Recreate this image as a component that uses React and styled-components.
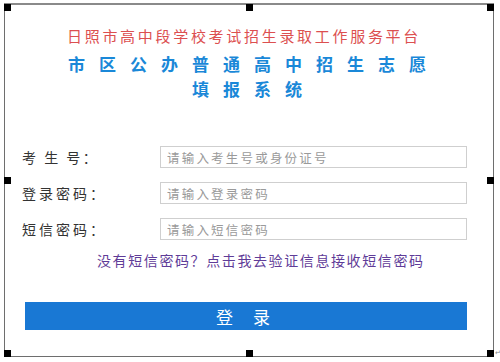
import React from 'react';
import styled, { createGlobalStyle } from 'styled-components';

const GlobalStyle = createGlobalStyle`
  body {
    margin: 0;
    background: #ffffff;
    font-family: "Noto Sans CJK SC", "Liberation Sans", sans-serif;
  }
`;

const Page = styled.div`
  width: 500px;
  height: 362px;
  padding: 3px 0 0 4px;
  box-sizing: border-box;
  position: relative;
`;

const Frame = styled.div`
  position: relative;
  width: 490px;
  height: 354px;
  box-sizing: border-box;
  border: 1px solid #6e6e6e;
  border-top: 2px solid #8a8a8a;
  padding-top: 22px;
`;

/* selection handles sit over the frame border */
const HandleLayer = styled.div`
  position: absolute;
  inset: -1px -1px -1px -1px;
  display: grid;
  grid-template-columns: repeat(3, 7px);
  grid-template-rows: repeat(3, 7px);
  justify-content: space-between;
  align-content: space-between;
  pointer-events: none;
`;

const Handle = styled.span`
  width: 7px;
  height: 7px;
  background: ${p => (p.$empty ? 'transparent' : '#000')};
`;

const ReturnMark = styled.span`
  position: absolute;
  left: 495px;
  top: 348px;
  font-size: 7px;
  color: #888;
  line-height: 8px;
`;

const PlatformTitle = styled.div`
  text-align: center;
  color: #dc4f50;
  font-size: 15px;
  line-height: 18px;
  letter-spacing: 2.7px;
  padding-right: 10px;
`;

const SystemTitle = styled.div`
  margin-top: 7px;
  display: flex;
  flex-direction: column;
  align-items: center;
  color: #1a88d8;
  font-size: 17px;
  font-weight: 700;
  line-height: 24.6px;
  letter-spacing: 14px;
  padding-left: 10px;
`;

const TitleLine = styled.div`
  white-space: nowrap;
`;

const Form = styled.div`
  margin-top: 45px;
  display: flex;
  flex-direction: column;
  gap: 14px;
  padding-left: 17px;
`;

const Row = styled.div`
  display: grid;
  grid-template-columns: 138px 307px;
  align-items: center;
  height: 22px;
`;

const Label = styled.label`
  color: #333;
  font-size: 14px;
  letter-spacing: ${p => (p.$spaced ? '2.5px' : '3px')};
  white-space: pre;
`;

const Input = styled.input`
  box-sizing: border-box;
  width: 307px;
  height: 22px;
  border: 1px solid #cfcfcf;
  padding: 0 6px;
  font-family: inherit;
  font-size: 12.5px;
  letter-spacing: 2.2px;
  outline: none;
  &::placeholder {
    color: #9a9a9a;
  }
`;

const SmsLink = styled.a`
  display: block;
  margin-top: 11px;
  padding-left: 92px;
  color: #5f3c98;
  font-size: 14px;
  line-height: 18px;
  letter-spacing: 1.6px;
  text-decoration: none;
  cursor: pointer;
`;

const LoginButton = styled.button`
  display: block;
  margin: 33px 0 0 20px;
  width: 442px;
  height: 28px;
  border: none;
  background: #1978d4;
  color: #fff;
  font-family: inherit;
  font-size: 17px;
  letter-spacing: 8px;
  padding-left: 8px;
  cursor: pointer;
`;

const fields = [
  { label: '考 生 号：', placeholder: '请输入考生号或身份证号', spaced: true },
  { label: '登录密码：', placeholder: '请输入登录密码' },
  { label: '短信密码：', placeholder: '请输入短信密码' },
];

const handleCells = [0, 1, 2, 3, 4, 5, 6, 7, 8];

export default function App() {
  return (
    <Page>
      <GlobalStyle />
      <Frame>
        <HandleLayer>
          {handleCells.map(i => (
            <Handle key={i} $empty={i === 4} />
          ))}
        </HandleLayer>

        <PlatformTitle>日照市高中段学校考试招生录取工作服务平台</PlatformTitle>
        <SystemTitle>
          <TitleLine>市区公办普通高中招生志愿</TitleLine>
          <TitleLine>填报系统</TitleLine>
        </SystemTitle>

        <Form>
          {fields.map(f => (
            <Row key={f.placeholder}>
              <Label $spaced={f.spaced}>{f.label}</Label>
              <Input placeholder={f.placeholder} />
            </Row>
          ))}
        </Form>

        <SmsLink>没有短信密码？点击我去验证信息接收短信密码</SmsLink>

        <LoginButton>登 录</LoginButton>
      </Frame>
      <ReturnMark>↵</ReturnMark>
    </Page>
  );
}
